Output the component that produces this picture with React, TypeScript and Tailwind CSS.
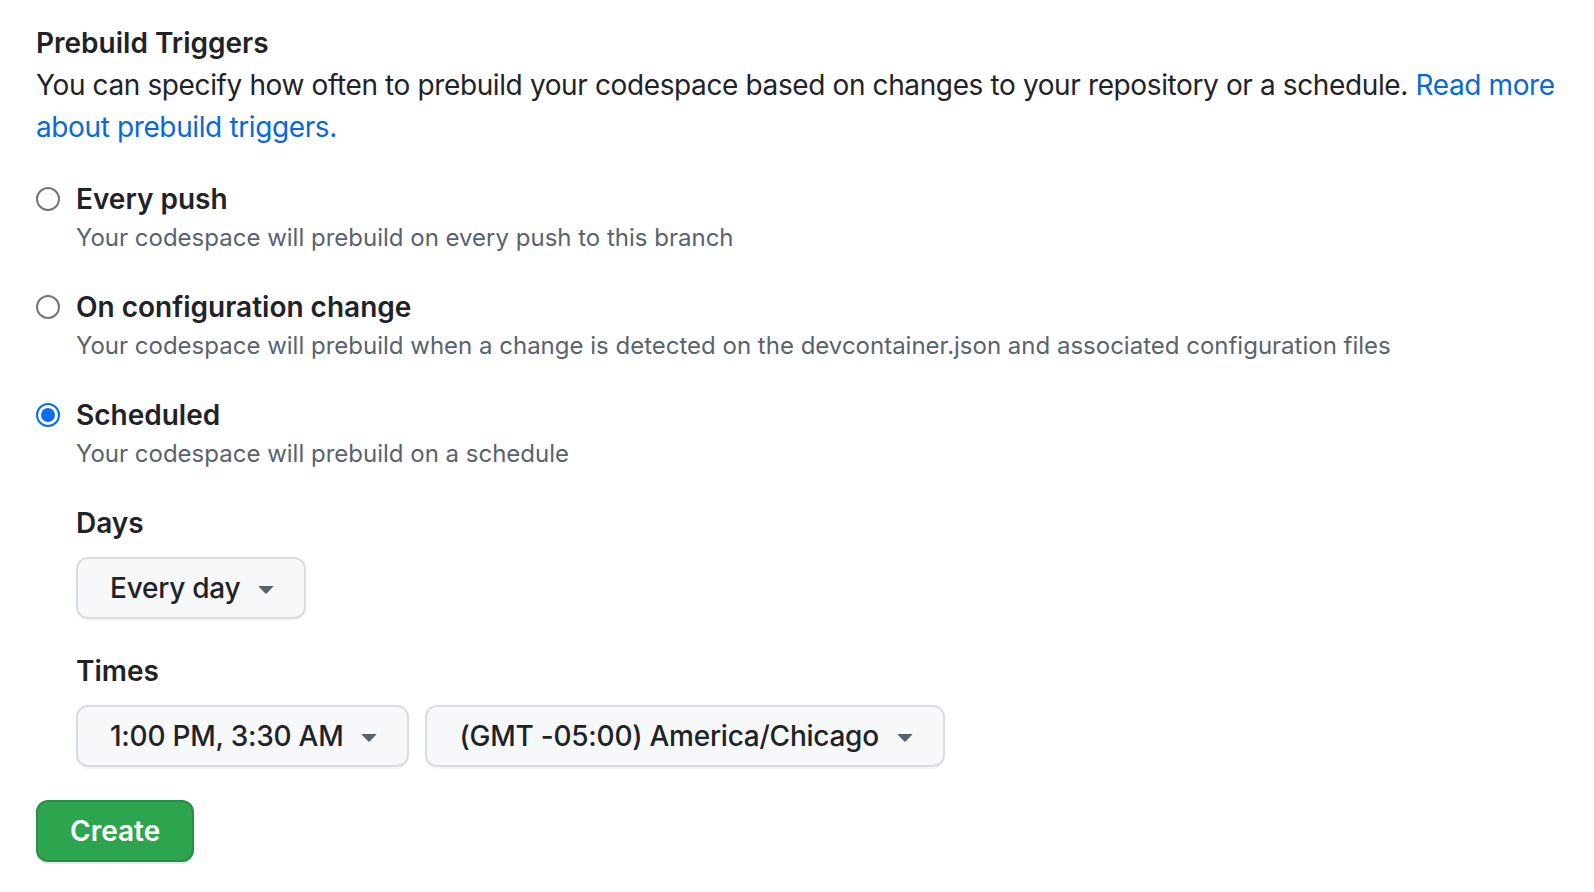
import React, { useState } from "react";

function Caret() {
  return (
    <svg width="32" height="32" viewBox="0 0 16 16" className="shrink-0 fill-[#59636e] -mr-[6px]">
      <path d="m4.427 7.427 3.396 3.396a.25.25 0 0 0 .354 0l3.396-3.396A.25.25 0 0 0 11.396 7H4.604a.25.25 0 0 0-.177.427Z" />
    </svg>
  );
}

function SelectButton({ label }: { label: string }) {
  return (
    <button
      type="button"
      className="h-[62px] flex items-center gap-[10px] pl-[32px] pr-[28px] rounded-[12px] border-2 border-[#d9dde2] bg-[#f6f8fa] shadow-[0_2px_0_rgba(31,35,40,0.04)] text-[28px] font-medium tracking-[-0.25px] text-[#1f2328]"
    >
      <span>{label}</span>
      <Caret />
    </button>
  );
}

const options = [
  { id: "push", title: "Every push", note: "Your codespace will prebuild on every push to this branch" },
  {
    id: "config",
    title: "On configuration change",
    note: "Your codespace will prebuild when a change is detected on the devcontainer.json and associated configuration files",
  },
  { id: "scheduled", title: "Scheduled", note: "Your codespace will prebuild on a schedule" },
];

export default function App() {
  const [selected, setSelected] = useState("scheduled");

  return (
    <main
      className="min-h-screen bg-white pl-[36px] pt-[22px] text-[#1f2328]"
      style={{ fontFamily: "Inter, 'Noto Sans', sans-serif" }}
    >
      <h2 className="text-[28px] leading-[42px] font-semibold">Prebuild Triggers</h2>
      <p className="text-[28px] leading-[42px] tracking-[-0.38px]">
        You can specify how often to prebuild your codespace based on changes to your repository or a schedule.{" "}
        <a href="#" className="text-[#0969da]">
          <span className="whitespace-nowrap">Read more</span>
          <br />
          about prebuild triggers.
        </a>
      </p>

      <div className="mt-[30px] flex flex-col gap-[30px]">
        {options.map((o) => (
          <div key={o.id}>
            <label className="flex items-center gap-[16px] cursor-pointer" onClick={() => setSelected(o.id)}>
              {selected === o.id ? (
                <span className="w-[24px] h-[24px] rounded-full border-2 border-[#0b6cf2] flex items-center justify-center">
                  <span className="w-[14px] h-[14px] rounded-full bg-[#0b6cf2]" />
                </span>
              ) : (
                <span className="w-[24px] h-[24px] rounded-full border-2 border-[#767676] bg-white" />
              )}
              <span className="text-[28px] leading-[42px] font-semibold">{o.title}</span>
            </label>
            <p className="pl-[40px] text-[24px] leading-[36px] text-[#59636e]">{o.note}</p>
          </div>
        ))}
      </div>

      <div className="pl-[40px] mt-[30px]">
        <div className="text-[28px] leading-[42px] font-semibold">Days</div>
        <div className="mt-[13px] flex">
          <SelectButton label="Every day" />
        </div>

        <div className="mt-[31px] text-[28px] leading-[42px] font-semibold">Times</div>
        <div className="mt-[13px] flex gap-[16px]">
          <SelectButton label="1:00 PM, 3:30 AM" />
          <SelectButton label="(GMT -05:00) America/Chicago" />
        </div>
      </div>

      <button
        type="button"
        className="mt-[33px] h-[62px] px-[32px] rounded-[12px] border-2 border-[#298e46] bg-[#2da44e] text-white text-[28px] font-semibold shadow-[0_2px_0_rgba(31,35,40,0.1)]"
      >
        Create
      </button>
    </main>
  );
}
